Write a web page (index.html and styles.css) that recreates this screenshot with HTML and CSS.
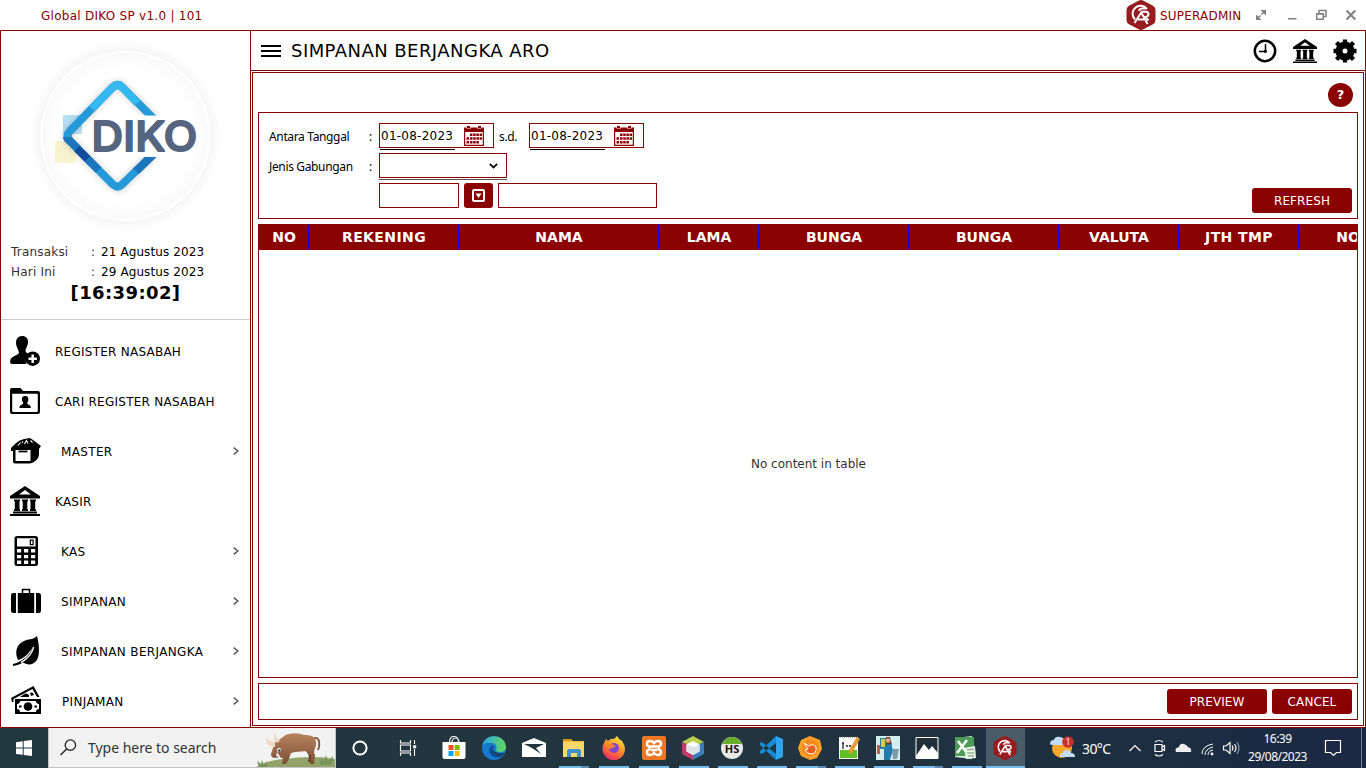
FILE: index.html
```html
<!DOCTYPE html>
<html lang="id">
<head>
<meta charset="utf-8">
<title>Global DIKO SP</title>
<link rel="stylesheet" href="styles.css">
</head>
<body>
<svg width="0" height="0" class="defs">
  <defs>
    <symbol id="bank" viewBox="0 0 30 30"><path fill-rule="evenodd" d="M15 0 30 10v2.500H0V10ZM15 4 9 8.500h12Z"/><path d="M4 13.500h6v1.800H9.500v8h.5V25H4v-1.700h.8v-8H4ZM12 13.500h6v1.800h-.7v8h.7V25h-6v-1.700h.7v-8H12ZM20 13.500h6v1.800h-.8v8h.8V25h-6v-1.700h.5v-8H20ZM3 25.500h24v2H3ZM0 28h30v2H0Z"/></symbol>
    <symbol id="calendar" viewBox="0 0 20 20"><path fill="#8b0000" d="M0 1.500h3V0h3v1.500h8V0h3v1.500h3V20H0Z"/><path fill="#fff" d="M1.200 6h17.600v12.800H1.200ZM2.500 0H3v2h3.500V0h7v2H17V0h.5v2.500h-4.500V1H7v1.500H2.500Z"/><g fill="#8b0000"><path d="M6 7.500h2.500V10H6ZM9.200 7.500h2.500V10H9.200ZM12.400 7.500h2.500V10h-2.500ZM15.600 7.500h2.500V10h-2.500ZM2.500 11.200H5v2.500H2.500ZM6 11.200h2.500v2.500H6ZM9.200 11.200h2.500v2.500H9.200ZM12.400 11.200h2.500v2.500h-2.500ZM15.600 11.200h2.500v2.500h-2.500ZM2.500 15H5v2.500H2.500ZM6 15h2.500v2.500H6ZM9.200 15h2.500v2.500H9.200ZM12.400 15h2.500v2.500h-2.500Z"/></g></symbol>
    <symbol id="emblem" viewBox="0 0 30 30"><path fill="#971c20" d="M12.500.7q2.500-1.400 5 0l9.500 5.100q2.400 1.400 2.500 4v10.400q-.1 2.600-2.500 4l-9.500 5.100q-2.500 1.400-5 0L3 24.200Q.6 22.800.5 20.200V9.800Q.6 7.200 3 5.800Z"/><g fill="none" stroke="#fff" stroke-width="2"><path d="M21 9A8 8 0 1 0 9 19.500M20.500 8.500h-4a3.500 3.500 0 0 0-3.500 2.500M16 11.800h4q2.500.2 2.500 2.400T19.500 17l3 3.500"/><path d="m8.500 23 6.800-10.500L21.500 24M12 19.500h6"/></g></symbol>
    <symbol id="chev" viewBox="0 0 6 8"><path d="m.7.700 4.200 3.300L.7 7.300" fill="none" stroke="#555" stroke-width="1.500"/></symbol>
  </defs>
</svg>

<header class="titlebar">
  <span class="app-name">Global DIKO SP v1.0 | 101</span>
  <div class="user">
    <svg class="user-logo"><use href="#emblem"/></svg>
    <span>SUPERADMIN</span>
    <svg class="win-buttons" viewBox="1250 5 110 20" fill="none" stroke="#808080" stroke-width="1.500">
      <g fill="#808080" stroke="none"><path d="M1260.500 10h5.500v5.500ZM1256 14.500v5.500h5.500Z"/></g>
      <path d="m1257.500 18.500 3-3M1261.500 14.500l3-3M1288 18.700h8.500M1319 13.500v-3h7v6h-3M1316.700 13.700h6.600v5.600h-6.600ZM1316 14h8"/>
      <path d="m1346.500 10.500 8.800 9M1355.300 10.500l-8.800 9" stroke-width="2"/>
    </svg>
  </div>
</header>

<div class="workspace">
  <aside class="sidebar">
    <svg class="logo" viewBox="1 31 249 205">
      <defs>
        <radialGradient id="halo" gradientUnits="userSpaceOnUse" cx="125.500" cy="136" r="96"><stop offset=".7" stop-color="#fff"/><stop offset=".87" stop-color="#f9f9f9"/><stop offset=".9" stop-color="#f7f7f7"/><stop offset="1" stop-color="#fff"/></radialGradient>
        <clipPath id="gap"><path d="M50 70H170V115.500H139V157H170V200H50Z"/></clipPath>
        <filter id="soft" x="-20%" y="-20%" width="140%" height="140%"><feGaussianBlur stdDeviation="2.500"/></filter>
      </defs>
      <circle cx="125.500" cy="136" r="96" fill="url(#halo)"/>
      <circle cx="125.500" cy="136" r="84" fill="none" stroke="#fff" stroke-width="2.200"/>
      <path d="M63 115h19v19H63Z" fill="#b9dff3"/>
      <rect x="55" y="141" width="21" height="22" rx="2" fill="#f8f2ce"/>
      <path d="M155 120 122 87Q118 83 113 87L70 131Q65 136 70 141l43 44q5 4 9 0l32-32" fill="none" stroke="#000" stroke-opacity=".13" stroke-width="11" filter="url(#soft)" clip-path="url(#gap)"/>
      <g clip-path="url(#gap)" fill="none" stroke-width="8">
        <path d="m156 121-34-34q-4-4-9 0L70 131q-5 5 0 10l43 43.500q5 4 9 0l33-32" stroke="#2699d8"/>
        <path d="M92 108.500 113 87q5-4 9 0l15.500 16" stroke="#35b8f0"/>
        <path d="M67 137q0 2 3 4l8 8" stroke="#1b76be"/>
        <path d="m77 148.500 10.500 10.500" stroke="#134b9b"/>
        <path d="m87.500 159 11 11M136 171.300l20-19.500" stroke="#1b76be"/>
      </g>
      <text x="91.500" y="151" class="logo-text" textLength="106" lengthAdjust="spacingAndGlyphs">DIKO</text>
    </svg>
    <div class="dates">
      <span>Transaksi</span><i>:</i><b>21 Agustus 2023</b>
      <span>Hari Ini</span><i>:</i><b>29 Agustus 2023</b>
    </div>
    <div class="clock">[16:39:02]</div>
    <nav class="menu">
      <a class="item"><svg viewBox="0 0 30 30"><path d="M12 0c4.500 0 6.500 3 6 7-.4 3-2 5-2.500 7 0 2.500 1 3 3.500 4-3 2.500-4 6-2.500 10H2c-3 0-2-5 0-6.500 2.500-1.800 6-2.500 7-4.500 0-3-3-5.500-3-10.500C6 3 8 0 12 0Z"/><circle cx="22.700" cy="22.700" r="7.300"/><path d="M22.700 18.500v8.400M18.500 22.700h8.400" stroke="#fff" stroke-width="2.500"/></svg><span>REGISTER NASABAH</span></a>
      <a class="item"><svg viewBox="0 0 30 30"><path fill-rule="evenodd" d="M2 2h8.500l2.500 3H28q2 0 2 2v19q0 2-2 2H2q-2 0-2-2V4q0-2 2-2Zm.2 5.700V25q0 1 1 1h23.600q1 0 1-1V8.700q0-1-1-1Z"/><path d="M15 10c3 0 3.700 2 3.300 4.200l-1.200 3.300c1 1.500 3.700 1 3.700 4.500H9.500c0-3.500 2.800-3 3.800-4.500L12 14.200c-.4-2.200.4-4.200 3-4.200Z"/></svg><span>CARI REGISTER NASABAH</span></a>
      <a class="item sub"><svg viewBox="0 0 30 30"><path d="M0 12 4 8Q8 4 13 3l6-1 3 2 8 6-2 3v5c0 4-3 7-6 8.500l-3 1H4q-2 0-2-2V15H0Z"/><path d="M4.500 14h15v11h-15Z" fill="#fff"/><path d="M7.500 15.500h9" stroke="#000" stroke-width="1.800"/><path d="m7 9.500 2.500-3M13.500 8l2-3.500 1.500 3M11 7l1-1.500M19.500 4.500l2 2" fill="none" stroke="#fff" stroke-width="1.100"/></svg><span>MASTER</span><svg class="chev"><use href="#chev"/></svg></a>
      <a class="item"><svg><use href="#bank"/></svg><span>KASIR</span></a>
      <a class="item sub"><svg viewBox="0 0 30 30"><rect x="3.500" y="0" width="23.500" height="30" rx="2.500"/><path fill="#fff" d="M6 2.300h18.500v8.200H6ZM6 13h4.200v3.500H6ZM13 13h4.200v3.500H13ZM20 13h4.200v3.500H20ZM6 19h4.200v3.300H6ZM13 19h4.200v3.300H13ZM20 19h4.200v3.300H20ZM6 24.500h4.200V28H6ZM13 24.500h4.200V28H13ZM20 24.500h4.200V28H20Z"/><path d="M19.300 4.200h2.800v4.500h-2.800Z" fill="none" stroke="#000" stroke-width="1.200"/></svg><span>KAS</span><svg class="chev"><use href="#chev"/></svg></a>
      <a class="item sub"><svg viewBox="0 0 30 30"><path d="M2.500 7H5v20H2.500Q0 27 0 24.500v-15Q0 7 2.500 7ZM6.800 7h16.400v20H6.800ZM25 7h2.500Q30 7 30 9.500v15q0 2.500-2.500 2.500H25Z"/><path d="M11.500 7V3.500h7V7" fill="none" stroke="#000" stroke-width="1.500"/></svg><span>SIMPANAN</span><svg class="chev"><use href="#chev"/></svg></a>
      <a class="item sub"><svg viewBox="0 0 30 30"><path d="M26 0c3 12 4 27-7 28.500-3 .2-5-1-7-2C8 29 5 29.500 2 30v-2c5-1 12-5 15.500-9.500 2-2 3-4 4-6.500-5 6.500-8 10-14.500 12C2 12 9 5 18 3.500 22 3 24 2 26 0Z"/><path d="M22.500 11q-1 6-6.500 11-3 3-6 4.500" fill="none" stroke="#fff" stroke-width="1.400"/></svg><span>SIMPANAN BERJANGKA</span><svg class="chev"><use href="#chev"/></svg></a>
      <a class="item sub pin"><svg viewBox="0 0 30 30"><path d="m0 12 22.500-12L28.500 11H26L21.500 3 2.500 13v3H1Z"/><path d="m9 11 3-2q3-3 6 0v2ZM19 7q2-1 3 0l1 2-3 1Z"/><path d="M4 13h26v15H4Z"/><path d="M9 15h16q0 2.500 3 3v5q-3 0-3 3H9q0-3-3-3v-5q3-.5 3-3Z" fill="#fff"/><circle cx="17" cy="20.500" r="4.300"/><path d="M8 19.500h2.500v2H8ZM23.500 19.500H26v2h-2.500Z"/></svg><span>PINJAMAN</span><svg class="chev"><use href="#chev"/></svg></a>
    </nav>
  </aside>

  <main class="main">
    <div class="main-head">
      <i class="burger"></i>
      <h1>SIMPANAN BERJANGKA ARO</h1>
      <div class="tools">
        <svg viewBox="0 0 24 24"><circle cx="12" cy="12" r="10.200" fill="none" stroke="#000" stroke-width="2.500"/><path d="M12.500 5v7.500H6" fill="none" stroke="#000" stroke-width="1.500"/><circle cx="12.300" cy="12.300" r="1.600"/></svg>
        <svg><use href="#bank"/></svg>
        <svg viewBox="0 0 24 24"><circle cx="12" cy="12" r="6" fill="none" stroke="#000" stroke-width="7"/><path d="M12 .5v4M12 19.500v4M.5 12h4M19.500 12h4M3.500 3.500l3 3M17.500 17.500l3 3M20.500 3.500l-3 3M6.500 17.500l-3 3" stroke="#000" stroke-width="4.300"/></svg>
      </div>
    </div>
    <section class="panel">
      <div class="help"><span>?</span></div>
      <form class="filters">
        <div class="line"><label>Antara Tanggal</label><i>:</i>
          <div class="date"><span>01-08-2023</span><svg><use href="#calendar"/></svg></div><em>s.d.</em>
          <div class="date"><span>01-08-2023</span><svg><use href="#calendar"/></svg></div></div>
        <div class="line"><label>Jenis Gabungan</label><i>:</i>
          <div class="select"><svg viewBox="0 0 9 6"><path d="m.8.800 3.700 3.700L8.200.800" fill="none" stroke="#111" stroke-width="1.900"/></svg></div></div>
        <div class="line codes"><div class="box code"></div>
          <div class="pick"><svg viewBox="0 0 13 13"><rect x="1" y="1" width="11" height="11" rx="1" fill="none" stroke="#fff" stroke-width="2"/><path d="M3.500 4.500h6l-3 4.500Z" fill="#fff"/></svg></div>
          <div class="box name"></div><div class="btn refresh">REFRESH</div></div>
      </form>
      <div class="table">
        <div class="thead"><b class="no">NO</b><b class="c150 rek">REKENING</b><b class="c200">NAMA</b><b class="c100">LAMA</b><b class="c150">BUNGA</b><b class="c150">BUNGA</b><b class="c120">VALUTA</b><b class="c120 jth">JTH TMP</b><b class="last">NO</b></div>
        <div class="empty">No content in table</div>
      </div>
      <footer class="actions"><div class="btn">PREVIEW</div><div class="btn cancel">CANCEL</div></footer>
    </section>
  </main>
</div>

<div class="taskbar">
  <div class="start"><svg viewBox="0 0 16 16" width="16" height="16" fill="#fff"><path d="M0 2.200 6.700 1.200v6.300H0ZM7.700 1 16 0v7.500H7.700ZM0 8.500h6.700v6.300L0 13.900ZM7.700 8.500H16V16l-8.300-1Z"/></svg></div>
  <div class="search">
    <svg viewBox="0 0 18 18" width="17" height="17"><circle cx="11" cy="6.500" r="5.500" fill="none" stroke="#222" stroke-width="1.400"/><path d="m7 10.500-6.500 6.500" stroke="#222" stroke-width="1.500"/></svg>
    <span>Type here to search</span>
    <svg class="bison" viewBox="257 728 79 39">
      <defs><linearGradient id="fur" x2="0" y2="1"><stop stop-color="#b88460"/><stop offset="1" stop-color="#7c4f35"/></linearGradient></defs>
      <path d="M257 767q12-7 28-8 30-4 51 0v8Z" fill="#92a36a"/><path d="M260 767l-2-6 4 3 1-4 2 5 3-4v6ZM321 765l1-7 3 4 2-7 2 6 5-5-1 9Z" fill="#76945b"/>
      <path d="M315 738c4-1 6 2 5 9l-1 3" fill="none" stroke="#7e5239" stroke-width="1.800"/>
      <path d="M290 752q-1 7-5 11M308 750q6 6 2 12" stroke="#633a27" stroke-width="3" fill="none"/>
      <path d="M276 742c3-2 6-3 9-6 6-4 15-3 20-1 8 0 13 2 12 10-1 5-3 6-1 10l-1 9h-4l1-8-4-5-12 1-4 1-2 5-3 6h-4l1-6-2 0-4-6-1 5c-3 2-5 0-5-3Z" fill="url(#fur)"/>
      <path d="M276 742c-6-1-9-3-8-7-3 8 2 12 8 12ZM281 741c-3-3-5-5-5-9-2 5-1 8 1 11Z" fill="#eedac4"/><circle cx="280" cy="750" r="2" fill="#fff"/><circle cx="280.300" cy="750.500" r="1.200" fill="#24334a"/><path d="M275 756q1 2 4 1" stroke="#553021" fill="none"/>
    </svg>
  </div>
  <div class="apps">
    <div class="app w48"><svg viewBox="0 0 24 24"><circle cx="12" cy="12" r="6.600" fill="none" stroke="#fff" stroke-width="2"/></svg></div>
    <div class="app w48 tv"><svg viewBox="0 0 24 24" fill="none" stroke="#fff" stroke-width="1.100"><path d="M4.500 4v3h10V4M4.500 20v-3h10v3M4.500 9h10v6h-10ZM18.500 4v4M18.500 13v7"/><path d="M17.200 9.300h3v3h-3Z" fill="#fff" stroke="none"/></svg></div>
    <div class="app w40"><svg viewBox="0 0 24 24"><path d="M7.500 7q0-6.500 4.500-6.500T16.500 7M10 7q0-5 4-5 3 0 3 5" fill="none" stroke="#eee" stroke-width="1.200"/><path d="M.5 6h23v15q0 2-2 2h-19q-2 0-2-2Z" fill="#fff"/><path d="M6.500 9h5v5h-5Z" fill="#f05023"/><path d="M12.700 9h5v5h-5Z" fill="#7fba00"/><path d="M6.500 15h5v5h-5Z" fill="#00a4ef"/><path d="M12.700 15h5v5h-5Z" fill="#ffb900"/></svg></div>
    <div class="app w40"><svg viewBox="0 0 24 24"><defs><linearGradient id="e1"><stop stop-color="#28a4e8"/><stop offset="1" stop-color="#63d857"/></linearGradient></defs><circle cx="12" cy="12" r="12" fill="#1579ce"/><path d="M.5 9C3-3 23-3 24 11q0 5-6 5-4 0-4-2 2-6-4-7Q4 6 .5 9Z" fill="url(#e1)"/><path d="M8 11c-3 6 3 12 10 10q3-1 4-3-8 3-11-2-2-3 1-5-1-3-4 0Z" fill="#104b94"/><path d="M12 11q-2 3 1 5 5 3 9 1 1 0 0 1-5 3-9 0-4-3-1-7Z" fill="#203640"/></svg></div>
    <div class="app w40"><svg viewBox="0 0 24 24"><path d="M0 7 12 2l12 5v14H0Z" fill="#fff"/><path d="M2 8h20l-8 4 5 6-9-6Z" fill="#20343d"/></svg></div>
    <div class="app w40 run two"><svg viewBox="0 0 24 24"><path d="M1 3h8l2 2h11v16H1Z" fill="#f4bd37"/><path d="M1 6h21v15H1Z" fill="#ffd868"/><path d="M1 3h8v2H1Z" fill="#d89414"/><path d="M5 21v-6q0-2 2-2h10q2 0 2 2v6h-4v-4H9v4Z" fill="#3f91d4"/></svg></div>
    <div class="app w40 run"><svg viewBox="0 0 24 24"><defs><linearGradient id="ff" x1=".8" x2=".3" y2="1"><stop stop-color="#fff044"/><stop offset=".5" stop-color="#ff8b24"/><stop offset="1" stop-color="#ee286c"/></linearGradient></defs><path d="M2 7 4 3l2 2q3-3 6-2l3-3q2 4 5 5 3 4 3 8a11.200 11.200 0 0 1-22.400 0q0-4 1.400-6Z" fill="url(#ff)"/><circle cx="12" cy="12" r="5" fill="#8045cf"/><path d="M5 9q6-3 9 2-4 0-5 2-3-1-4-4Z" fill="#ff8030"/></svg></div>
    <div class="app w40 run"><svg viewBox="0 0 24 24"><rect width="24" height="24" rx="2" fill="#ee7724"/><path d="M8.500 10.500q-3.500 0-3.500-2.500 0-3 3-3 2.500 0 4 2 1.500-2 4-2 3 0 3 3 0 2.500-3.500 2.500h-7M8.500 13.500Q5 13.500 5 16q0 3 3 3 2.500 0 4-2 1.500 2 4 2 3 0 3-3 0-2.500-3.500-2.500M7.500 10q0 2 0 4M16.500 10q0 2 0 4M9 14h6" fill="none" stroke="#fff" stroke-width="2.400"/></svg></div>
    <div class="app w39 run"><svg viewBox="0 0 24 24"><path d="m12 0 11 6-11 5L1 6Z" fill="#b8ce50"/><path d="M1 6 12 12v12L1 18Z" fill="#c33969"/><path d="m23 6-11 6v12l11-6Z" fill="#3b7dbb"/><path d="m12 5 6.500 3.500v7L12 19l-6.500-3.500v-7Z" fill="#fff"/><path d="M12 11v8l6.500-3.500v-7ZM12 11 5.500 8.500v7L12 19Z" fill="#dfe3e5"/></svg></div>
    <div class="app w39 run"><svg viewBox="0 0 24 24"><circle cx="12" cy="12" r="11" fill="#e9e9e9"/><path d="M2 8Q5 1 12 1t10 7Z" fill="#64ac29"/><text x="12" y="16.500" text-anchor="middle" class="hs">HS</text></svg></div>
    <div class="app w39 run"><svg viewBox="0 0 24 24"><path d="M17 0 24 3v18l-7 3Z" fill="#2fa4ed"/><path d="M1 7 3 6l14 12v6L1 9ZM1 17l2 1L17 7V0L1 15Z" fill="#178bd3"/></svg></div>
    <div class="app w39 run two"><svg viewBox="0 0 24 24"><path d="M12 0 22 4l2 9-5 9-7 2-9-4-3-8 3-8Z" fill="#ffa126"/><circle cx="12" cy="12" r="8.500" fill="#f38a1c"/><path d="m6 7 5 3q4-3 7 1 1 7-5 7-4 0-6-4l3-1Z" fill="#ec6224" stroke="#fff"/></svg></div>
    <div class="app w39 run"><svg viewBox="0 0 24 24"><path d="M2 1h19v22H2Z" fill="#fafafa"/><path d="M3 14h17v8H3Z" fill="#5fbf24"/><path d="M3 1h17" stroke="#555" stroke-dasharray="1 1"/><path d="M6 7v6M5 7h2M9 10h2M12 10h2" stroke="#222" stroke-width="1.300"/><path d="m20 1 3 2-8 14-3 1v-4Z" fill="#e89938"/></svg></div>
    <div class="app w39 run"><svg viewBox="0 0 24 24"><path d="M0 0h24v24H0Z" fill="#d5edf0"/><path d="M4 2h6v11H4ZM8 8l7-1 2 7-3 10H8Z" fill="#247da9"/><path d="M5 3h4v8H5Z" fill="#dfca31"/><path d="M10 1h4l2 8-2-1-4 1Z" fill="#68402e"/><circle cx="12" cy="4.500" r="2.200" fill="#deb08b"/><path d="M16 13h7l-2 10h-4Z" fill="#7c99a9"/><path d="M1 9h3v9H1Z" fill="#b76549"/></svg></div>
    <div class="app w39 run two"><svg viewBox="0 0 24 24"><path d="M1 1.500h22v21H1Z" fill="#20303a" stroke="#fff"/><path d="M1 20 9 8l5 6 3-4 6 7v6H1Z" fill="#fff"/></svg></div>
    <div class="app w39 run"><svg viewBox="0 0 24 24"><path d="M1 2 18 0v23L1 21Z" fill="#dceddd"/><path d="M1 1h19v10l-5 9H1Z" fill="#4e9a58"/><path d="m4 5 9 12M13 4 3 17" stroke="#fff" stroke-width="2.500"/><path d="m10 12 11-2 1 12-10 1Z" fill="#eaf3e5"/><path d="m13 14 7-1M13 17h7M14 20h6" stroke="#5e9c64"/></svg></div>
    <div class="app w39 run active"><svg><use href="#emblem"/></svg></div>
  </div>
  <svg class="tray" viewBox="1025 728 216 40">
    <circle cx="1062" cy="748" r="10" fill="#f9a72b"/><path d="M1050 744q0-4 4-4 1-4 6-3 3 0 4 4 2 1 1 4h-12q-3 0-3-1ZM1060 757q-1-4 3-4 1-4 5-3 3 1 3 3 4 0 4 4Z" fill="#c3dcf5"/><circle cx="1068" cy="742" r="5.800" fill="#c9302b"/><text x="1068" y="745.200" text-anchor="middle" class="badge">1</text>
    <text x="1082" y="753.500" class="temp" textLength="29">30°C</text>
    <g fill="none" stroke="#fff" stroke-width="1.200"><path d="m1129.500 751 5.500-5.500 5.500 5.500M1155 744.500h7v7h-7ZM1162 747l2.500-1.500v5l-2.500-1.500M1155 742q4-3 8 0M1155 754.500q4 3 8 0"/><path d="M1202 754q0-8 11-10M1205 755q0-6 8-8M1208 755q0-4 5-5" stroke-width="1"/><path d="M1223.500 746h2.500l4-3.500v11l-4-3.500h-2.500ZM1232 745.500q2 2.500 0 5M1234.500 744q3 4 0 8"/><path d="M1237 742q4 6 0 12" opacity=".5"/></g>
    <path d="M1176 752q-2-4 3-5 1-4 5-3 3 1 4 3 4 1 3 5Z" fill="#eee"/><circle cx="1212" cy="754" r="1.400" fill="#fff"/>
  </svg>
  <div class="time"><span>16:39</span><span>29/08/2023</span></div>
  <svg class="notify" viewBox="1320 728 46 40"><path d="M1325.500 740.500h15v12h-4l-3 3-3-3h-5Z" fill="none" stroke="#fff" stroke-width="1.200"/><path d="M1361.500 728v40" stroke="#75808e"/></svg>
</div>
</body>
</html>
```

FILE: styles.css
```css
* { box-sizing: border-box; }
body { margin: 0; width: 1366px; height: 768px; overflow: hidden; background: #fff; color: #000; font: 12px/16px "DejaVu Sans", sans-serif; letter-spacing: .2px; display: flex; flex-direction: column; }
svg { display: block; flex: none; }
i, em { font-style: normal; }
.defs { position: absolute; }

.titlebar { height: 30px; flex: none; display: flex; justify-content: space-between; align-items: center; padding: 0 6px 0 41px; color: #8b0000; }
.app-name { letter-spacing: .27px; padding-top: 1px; }
.user { display: flex; align-items: center; }
.user-logo { width: 30px; height: 30px; margin-right: 4px; }
.user > span { width: 90px; padding-top: 1px; }
.win-buttons { width: 110px; height: 20px; }

.workspace { display: flex; height: 698px; flex: none; }
.sidebar { width: 250px; border: 1px solid #8b0000; border-right: 0; overflow: hidden; }
.logo { width: 249px; height: 205px; }
.logo-text { font: 500 41px Inter, sans-serif; fill: #55657f; stroke: #55657f; stroke-width: 2px; stroke-linejoin: round; }
.dates { display: grid; grid-template-columns: 80px 10px 1fr; row-gap: 4px; padding: 8px 0 0 10px; color: #333; }
.dates b { font-weight: 400; color: #000; letter-spacing: .1px; }
.clock { font-size: 18px; line-height: 22px; font-weight: 700; letter-spacing: .4px; text-align: center; margin-top: 2px; }
.menu { border-top: 1px solid #ccc; margin-top: 15px; padding-top: 7px; }
.item { display: flex; align-items: center; height: 50px; padding-left: 9px; }
.item > svg { width: 30px; height: 30px; margin-bottom: 2px; }
.item > span { margin-left: 15px; flex: 1; letter-spacing: .25px; }
.item.sub { padding-left: 10px; }
.item.sub > span { margin-left: 20px; letter-spacing: .35px; }
.item.pin > span { margin-left: 21px; }
.item > .chev { width: 6px; height: 8px; margin-right: 11px; }

.main { width: 1116px; border: 1px solid #8b0000; display: flex; flex-direction: column; }
.main-head { height: 40px; flex: none; border-bottom: 1px solid #8b0000; display: flex; align-items: center; padding: 0 8px 0 10px; }
.burger { width: 20px; height: 12px; border-top: 2px solid #000; border-bottom: 2px solid #000; background: linear-gradient(#000, #000) 0 3px / 100% 2px no-repeat; margin-top: 1px; }
h1 { margin: 0 auto 0 10px; font-size: 18px; line-height: 24px; font-weight: 400; letter-spacing: .45px; }
.tools { display: flex; gap: 16px; margin-top: 1px; }
.tools svg { width: 24px; height: 24px; }
.panel { margin: 1px; flex: 1; border: 1px solid #8b0000; padding: 0 5px 5px; display: flex; flex-direction: column; }
.help { height: 39px; padding: 10px 5px 0 0; display: flex; justify-content: flex-end; }
.help span { width: 25px; height: 24px; border-radius: 50%; background: #8b0000; color: #fff; font: 700 13px/24px "DejaVu Sans", sans-serif; text-align: center; }
.filters { height: 107px; border: 1px solid #8b0000; padding: 10px 5px 0 10px; display: flex; flex-direction: column; gap: 4px; }
.line { display: flex; height: 26px; align-items: flex-start; }
label { width: 100px; font: 12px/28px "Noto Sans", sans-serif; letter-spacing: -.35px; }
.line i { width: 10px; font: 12px/28px "Noto Sans", sans-serif; }
.line em { width: 35px; padding-left: 5px; font: 12px/28px "Noto Sans", sans-serif; letter-spacing: -.35px; }
.date { width: 115px; height: 25px; border: 1px solid #8b0000; display: flex; align-items: center; }
.date span { width: 75px; height: 26px; line-height: 25px; border-bottom: 1px solid #000; margin-top: 2px; padding-left: 1px; letter-spacing: .25px; }
.date svg { width: 20px; height: 20px; margin-left: 9px; }
.select { width: 128px; height: 25px; border: 1px solid #8b0000; box-shadow: 0 1px 0 0 #fff, 0 2px 0 0 #555; display: flex; align-items: center; justify-content: flex-end; padding-right: 8px; }
.select svg { width: 9px; height: 6px; }
.codes { padding-left: 110px; }
.box { height: 25px; border: 1px solid #8b0000; }
.code { width: 80px; }
.pick { width: 29px; height: 25px; margin: 0 5px; border-radius: 3px; background: #8b0000; display: grid; place-items: center; }
.pick svg { width: 13px; height: 13px; }
.name { width: 159px; }
.btn { width: 100px; height: 25px; line-height: 26px; border-radius: 3px; background: #8b0000; color: #fff; text-align: center; letter-spacing: .1px; }
.refresh { margin: 5px 0 0 auto; }
.table { margin-top: 5px; height: 454px; border: 1px solid #8b0000; overflow: hidden; }
.thead { height: 25px; background: #8b0000; color: #fff; display: flex; font-size: 14px; line-height: 24px; text-align: center; }
.thead b { flex: none; border-right: 1px solid #00f; letter-spacing: 0; padding-left: 1px; }
.thead .no { width: 50px; }
.thead .rek, .thead .jth { letter-spacing: .4px; }
.c100 { width: 100px; } .c120 { width: 120px; } .c150 { width: 150px; } .c200 { width: 200px; }
.thead .last { width: 98px; }
.empty { height: 427px; display: grid; place-items: center; color: #333; letter-spacing: 0; padding-left: 1px; }
.actions { margin-top: 5px; height: 37px; border: 1px solid #8b0000; display: flex; justify-content: flex-end; gap: 5px; padding: 5px 5px 0; }
.cancel { width: 80px; }

.taskbar { height: 40px; flex: none; display: flex; background: linear-gradient(90deg, #21383f, #22353f 50%, #1d3040 77%, #1b2844); color: #fff; font-family: "Noto Sans", sans-serif; letter-spacing: 0; }
.start { width: 48px; display: grid; place-items: center; }
.search { width: 288px; height: 40px; background: #f2f2f2; border: 1px solid #c4c4c4; border-top: 0; display: flex; align-items: center; padding-left: 11px; color: #333; }
.search span { font-size: 14px; margin: 1px 0 0 11px; width: 169px; letter-spacing: -.03px; }
.bison { width: 79px; height: 39px; }
.apps { display: flex; width: 689px; }
.app { flex: none; height: 40px; display: flex; justify-content: center; padding-top: 8px; }
.app svg { width: 24px; height: 24px; }
.w48 { width: 48px; } .w40 { width: 40px; } .w39 { width: 39px; padding-right: 2px; }
.tv { margin-right: 2px; }
.run { background: linear-gradient(#76b9ed, #76b9ed) 50% 100% / 30px 2px no-repeat; }
.two { background: linear-gradient(90deg, #76b9ed 22px, #5d8cb0 22px) 50% 100% / 30px 2px no-repeat; }
.active { background: linear-gradient(#76b9ed, #76b9ed) 50% 100% / 100% 2px no-repeat, #4b5c69; }
.hs { font: 700 11px "Open Sans", sans-serif; fill: #111; }
.tray { width: 216px; height: 40px; }
.badge { font: 9px "Open Sans", sans-serif; fill: #fff; }
.temp { font: 14px "Noto Sans", sans-serif; fill: #fff; }
.time { width: 73px; margin-right: 6px; font-size: 12px; line-height: 18px; padding-top: 2px; text-align: center; display: flex; flex-direction: column; letter-spacing: -.5px; white-space: nowrap; }
.notify { width: 46px; height: 40px; }
```
